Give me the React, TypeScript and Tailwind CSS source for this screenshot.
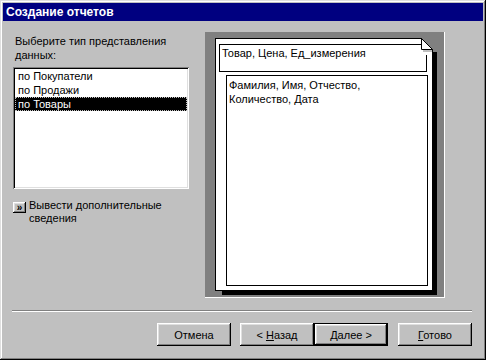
import React from "react";

const raised =
  "shadow-[inset_-1px_-1px_0_#000,inset_1px_1px_0_#fff,inset_-2px_-2px_0_#808080,inset_2px_2px_0_#dfdfdf]";

function Btn({ children, def = false }: { children: React.ReactNode; def?: boolean }) {
  if (def) {
    return (
      <div className="w-[74px] h-[23px] border border-black bg-[#c0c0c0]">
        <div className={`w-full h-full flex items-center justify-center ${raised}`}>
          <span className="whitespace-pre">{children}</span>
        </div>
      </div>
    );
  }
  return (
    <div className={`w-[74px] h-[23px] bg-[#c0c0c0] flex items-center justify-center ${raised}`}>
      <span className="whitespace-pre">{children}</span>
    </div>
  );
}

export default function App() {
  return (
    <div className="w-[486px] h-[360px] bg-[#c0c0c0] p-[3px] flex flex-col font-['Liberation_Sans',Arial,sans-serif] text-[11px] leading-[14px] text-black shadow-[inset_-1px_-1px_0_#000,inset_1px_1px_0_#dfdfdf,inset_-2px_-2px_0_#808080,inset_2px_2px_0_#fff]">
      <div className="h-[18px] bg-[#000080] flex items-center pl-[3px] text-white font-bold text-[12px]">
        Создание отчетов
      </div>
      <div className="flex items-start">
        <div className="ml-[10px] mt-[13px] w-[176px] flex flex-col">
          <div className="pl-[2px]">
            Выберите тип представления
            <br />
            данных:
          </div>
          <div className="mt-[5px] h-[122px] w-[176px] bg-white p-[2px] shadow-[inset_1px_1px_0_#808080,inset_-1px_-1px_0_#fff,inset_2px_2px_0_#000,inset_-2px_-2px_0_#dfdfdf]">
            <div className="h-[14px] pl-[3px]">по Покупатели</div>
            <div className="h-[14px] pl-[3px]">по Продажи</div>
            <div className="h-[14px] pl-[3px] bg-black text-white outline-1 outline-dotted outline-[#c0c0c0] -outline-offset-1">
              по Товары
            </div>
          </div>
          <div className="mt-[10px] flex items-start">
            <div className={`mt-[3px] w-[13px] h-[11px] bg-[#c0c0c0] flex items-center justify-center text-[10px] leading-[10px] font-bold ${raised}`}>
              »
            </div>
            <div className="ml-[3px] leading-[13px]">
              Вывести дополнительные
              <br />
              сведения
            </div>
          </div>
        </div>
        <div className="ml-[16px] mt-[11px] w-[240px] h-[266px] bg-[#808080] border-r border-b border-white pl-[10px] pt-[6px]">
          <div className="relative w-[218px] h-[253px] bg-white border border-black">
            <div className="absolute left-[6px] top-[252px] w-[215px] h-[4px] bg-black" />
            <div className="absolute left-[217px] top-[13px] w-[4px] h-[243px] bg-black" />
            <div className="ml-[3px] mt-[5px] w-[208px] h-[28px] border border-black px-[2px] pt-[1px]">
              Товар, Цена, Ед_измерения
            </div>
            <div className="ml-[10px] mt-[3px] w-[202px] h-[211px] border border-black pl-[2px] pt-[2px]">
              Фамилия, Имя, Отчество,
              <br />
              Количество, Дата
            </div>
            <svg
              className="absolute left-[205px] top-[-1px]"
              width="17"
              height="17"
              viewBox="0 0 17 17"
              shapeRendering="crispEdges"
            >
              <rect x="0" y="0" width="17" height="17" fill="#808080" />
              <polygon points="0,0 12,12 12,17 0,17" fill="#fff" />
              <rect x="0" y="0" width="1" height="1" fill="#000" />
              <rect x="11" y="11" width="1" height="6" fill="#000" />
              <rect x="12" y="14" width="4" height="3" fill="#000" />
              <rect x="2" y="12" width="9" height="2" fill="#c0c0c0" />
              <polygon points="0.5,0.5 0.5,11.5 11.5,11.5" fill="#fff" stroke="#000" strokeWidth="1" shapeRendering="auto" />
            </svg>
          </div>
        </div>
      </div>
      <div className="mt-[12px] ml-[9px] mr-[11px] h-[2px] border-t border-[#808080] border-b-white border-b" />
      <div className="mt-[11px] flex justify-end pr-[11px]">
        <Btn>Отмена</Btn>
        <div className="w-[9px]" />
        <Btn>
          {"< "}
          <u>Н</u>азад
        </Btn>
        <Btn def>
          <u>Д</u>алее{" >"}
        </Btn>
        <div className="w-[10px]" />
        <Btn>
          <u>Г</u>отово
        </Btn>
      </div>
    </div>
  );
}
